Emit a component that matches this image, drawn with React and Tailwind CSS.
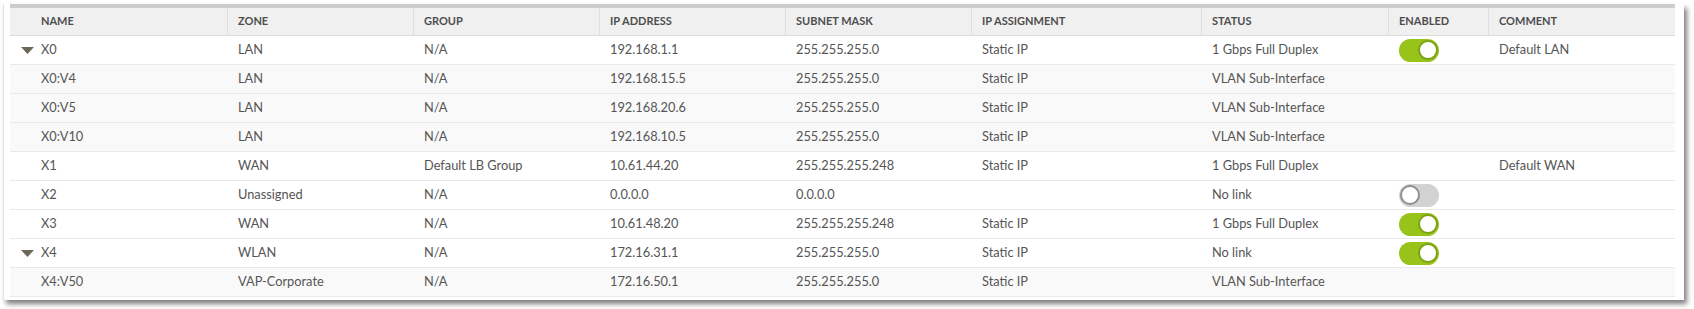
import React from "react";

const cols = "grid grid-cols-[217px_186px_186px_186px_186px_230px_187px_100px_187px]";

const headers = ["NAME", "ZONE", "GROUP", "IP ADDRESS", "SUBNET MASK", "IP ASSIGNMENT", "STATUS", "ENABLED", "COMMENT"];

const rows = [
  { name: "X0", arrow: true, zone: "LAN", group: "N/A", ip: "192.168.1.1", mask: "255.255.255.0", assign: "Static IP", status: "1 Gbps Full Duplex", enabled: "on", comment: "Default LAN", sub: false },
  { name: "X0:V4", zone: "LAN", group: "N/A", ip: "192.168.15.5", mask: "255.255.255.0", assign: "Static IP", status: "VLAN Sub-Interface", sub: true },
  { name: "X0:V5", zone: "LAN", group: "N/A", ip: "192.168.20.6", mask: "255.255.255.0", assign: "Static IP", status: "VLAN Sub-Interface", sub: true },
  { name: "X0:V10", zone: "LAN", group: "N/A", ip: "192.168.10.5", mask: "255.255.255.0", assign: "Static IP", status: "VLAN Sub-Interface", sub: true },
  { name: "X1", zone: "WAN", group: "Default LB Group", ip: "10.61.44.20", mask: "255.255.255.248", assign: "Static IP", status: "1 Gbps Full Duplex", comment: "Default WAN" },
  { name: "X2", zone: "Unassigned", group: "N/A", ip: "0.0.0.0", mask: "0.0.0.0", assign: "", status: "No link", enabled: "off" },
  { name: "X3", zone: "WAN", group: "N/A", ip: "10.61.48.20", mask: "255.255.255.248", assign: "Static IP", status: "1 Gbps Full Duplex", enabled: "on" },
  { name: "X4", arrow: true, zone: "WLAN", group: "N/A", ip: "172.16.31.1", mask: "255.255.255.0", assign: "Static IP", status: "No link", enabled: "on" },
  { name: "X4:V50", zone: "VAP-Corporate", group: "N/A", ip: "172.16.50.1", mask: "255.255.255.0", assign: "Static IP", status: "VLAN Sub-Interface", sub: true },
];

function Toggle({ on }) {
  if (on) {
    return (
      <div className="w-[40px] h-[23px] rounded-full bg-[#97c31b] flex items-center justify-end pr-[1px]">
        <div className="w-[20px] h-[20px] rounded-full bg-white border-[2px] border-[#7ba314]" />
      </div>
    );
  }
  return (
    <div className="w-[40px] h-[23px] rounded-full bg-[#d2d2d2] flex items-center justify-start pl-[1px]">
      <div className="w-[20px] h-[20px] rounded-full bg-white border-[2px] border-[#8f8f8f]" />
    </div>
  );
}

function Cell({ children }) {
  return (
    <div className="flex items-center h-full whitespace-nowrap pl-[11px]">
      {children}
    </div>
  );
}

export default function App() {
  return (
    <div className="w-[1694px] h-[309px] bg-white pt-[4px] pl-[3px]" style={{ fontFamily: "Lato, 'Open Sans', sans-serif" }}>
      <div className="w-[1681px] h-[296px] bg-white border-l border-[#e4e4e4] shadow-[3px_4px_5px_rgba(0,0,0,0.5)] pl-[6px]">
        <div className="w-[1665px]">
          <div className="h-[4px] bg-[#cdcdcd]" />
          <div className={`${cols} h-[28px] bg-[#f0f0f0] border-b border-[#dcdcdc] text-[11px] font-bold text-[#4e4e4e]`}>
            {headers.map((h, i) => (
              <div key={h} className={`flex items-center h-full ${i === 0 ? "pl-[31px]" : "pl-[10px] border-l border-[#dedede]"}`}>
                {h}
              </div>
            ))}
          </div>
          {rows.map((r) => (
            <div key={r.name} className={`${cols} h-[29px] border-b border-[#e9e9e9] text-[12.8px] text-[#555555] ${r.sub ? "bg-[#f9f9f9]" : "bg-white"}`}>
              <div className="flex items-center h-full pl-[11px]">
                <div className="w-[20px] flex items-center">
                  {r.arrow && (
                    <svg width="13" height="7" viewBox="0 0 13 7">
                      <path d="M0 0 L13 0 L6.5 7 Z" fill="#6c6858" />
                    </svg>
                  )}
                </div>
                <span>{r.name}</span>
              </div>
              <Cell>{r.zone}</Cell>
              <Cell>{r.group}</Cell>
              <Cell>{r.ip}</Cell>
              <Cell>{r.mask}</Cell>
              <Cell>{r.assign}</Cell>
              <Cell>{r.status}</Cell>
              <Cell>{r.enabled ? <Toggle on={r.enabled === "on"} /> : null}</Cell>
              <Cell>{r.comment}</Cell>
            </div>
          ))}
        </div>
      </div>
    </div>
  );
}
